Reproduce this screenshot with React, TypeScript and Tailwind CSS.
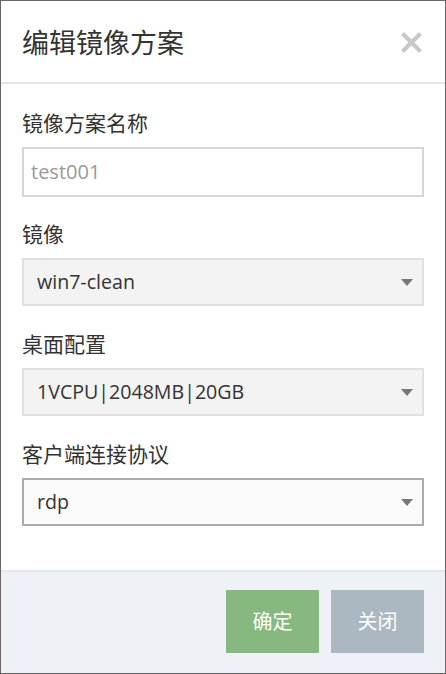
import React from "react";

const font = { fontFamily: '"Open Sans", "Noto Sans CJK SC", sans-serif' };

function Caret() {
  return (
    <svg width="12" height="7" viewBox="0 0 12 7" className="shrink-0">
      <path d="M0 0 L12 0 L6 7 Z" fill="#777" />
    </svg>
  );
}

function Select({ value, focused }: { value: string; focused?: boolean }) {
  return (
    <div
      className={
        focused
          ? "flex h-[48px] items-center justify-between border-2 border-[#aaaaaa] bg-[#fafafa] pl-[13px] pr-[9px]"
          : "flex h-[48px] items-center justify-between border-2 border-[#e0e0e0] bg-[#f3f3f3] pl-[13px] pr-[9px]"
      }
    >
      <span className="text-[19.6px] leading-none text-[#333]">{value}</span>
      <Caret />
    </div>
  );
}

export default function App() {
  return (
    <div
      className="flex h-[674px] w-[446px] flex-col border border-[#666] bg-white"
      style={font}
    >
      <div className="flex h-[83px] shrink-0 items-center justify-between border-b-2 border-[#e5e5e5] pl-[21px] pr-[22px] pt-[2px]">
        <span className="text-[27px] leading-none text-[#333]">编辑镜像方案</span>
        <svg width="23" height="23" viewBox="0 0 23 23">
          <path
            d="M2.5 2.5 L20.5 20.5 M20.5 2.5 L2.5 20.5"
            stroke="#c8c8c8"
            strokeWidth="4.2"
            strokeLinecap="butt"
          />
        </svg>
      </div>

      <div className="flex flex-1 flex-col px-[21px] pt-[25px]">
        <div className="text-[21px] leading-[28px] text-[#333]">镜像方案名称</div>
        <div className="mt-[10px] flex h-[50px] items-center border-2 border-[#d5d5d5] bg-white pl-[7px]">
          <span className="text-[20px] leading-none text-[#999]">test001</span>
        </div>

        <div className="mt-[23px] text-[21px] leading-[28px] text-[#333]">镜像</div>
        <div className="mt-[10px]">
          <Select value="win7-clean" />
        </div>

        <div className="mt-[24px] text-[21px] leading-[28px] text-[#333]">桌面配置</div>
        <div className="mt-[10px]">
          <Select value="1VCPU|2048MB|20GB" />
        </div>

        <div className="mt-[24px] text-[21px] leading-[28px] text-[#333]">客户端连接协议</div>
        <div className="mt-[10px]">
          <Select value="rdp" focused />
        </div>
      </div>

      <div className="flex h-[103px] shrink-0 items-start justify-end gap-[12px] border-t-2 border-[#e4e8ee] bg-[#eef1f6] pr-[21px] pt-[18px]">
        <div className="flex h-[63px] w-[93px] items-center justify-center bg-[#86b87f] text-[20px] text-white">
          确定
        </div>
        <div className="flex h-[63px] w-[93px] items-center justify-center bg-[#abb8c2] text-[20px] text-white">
          关闭
        </div>
      </div>
    </div>
  );
}
